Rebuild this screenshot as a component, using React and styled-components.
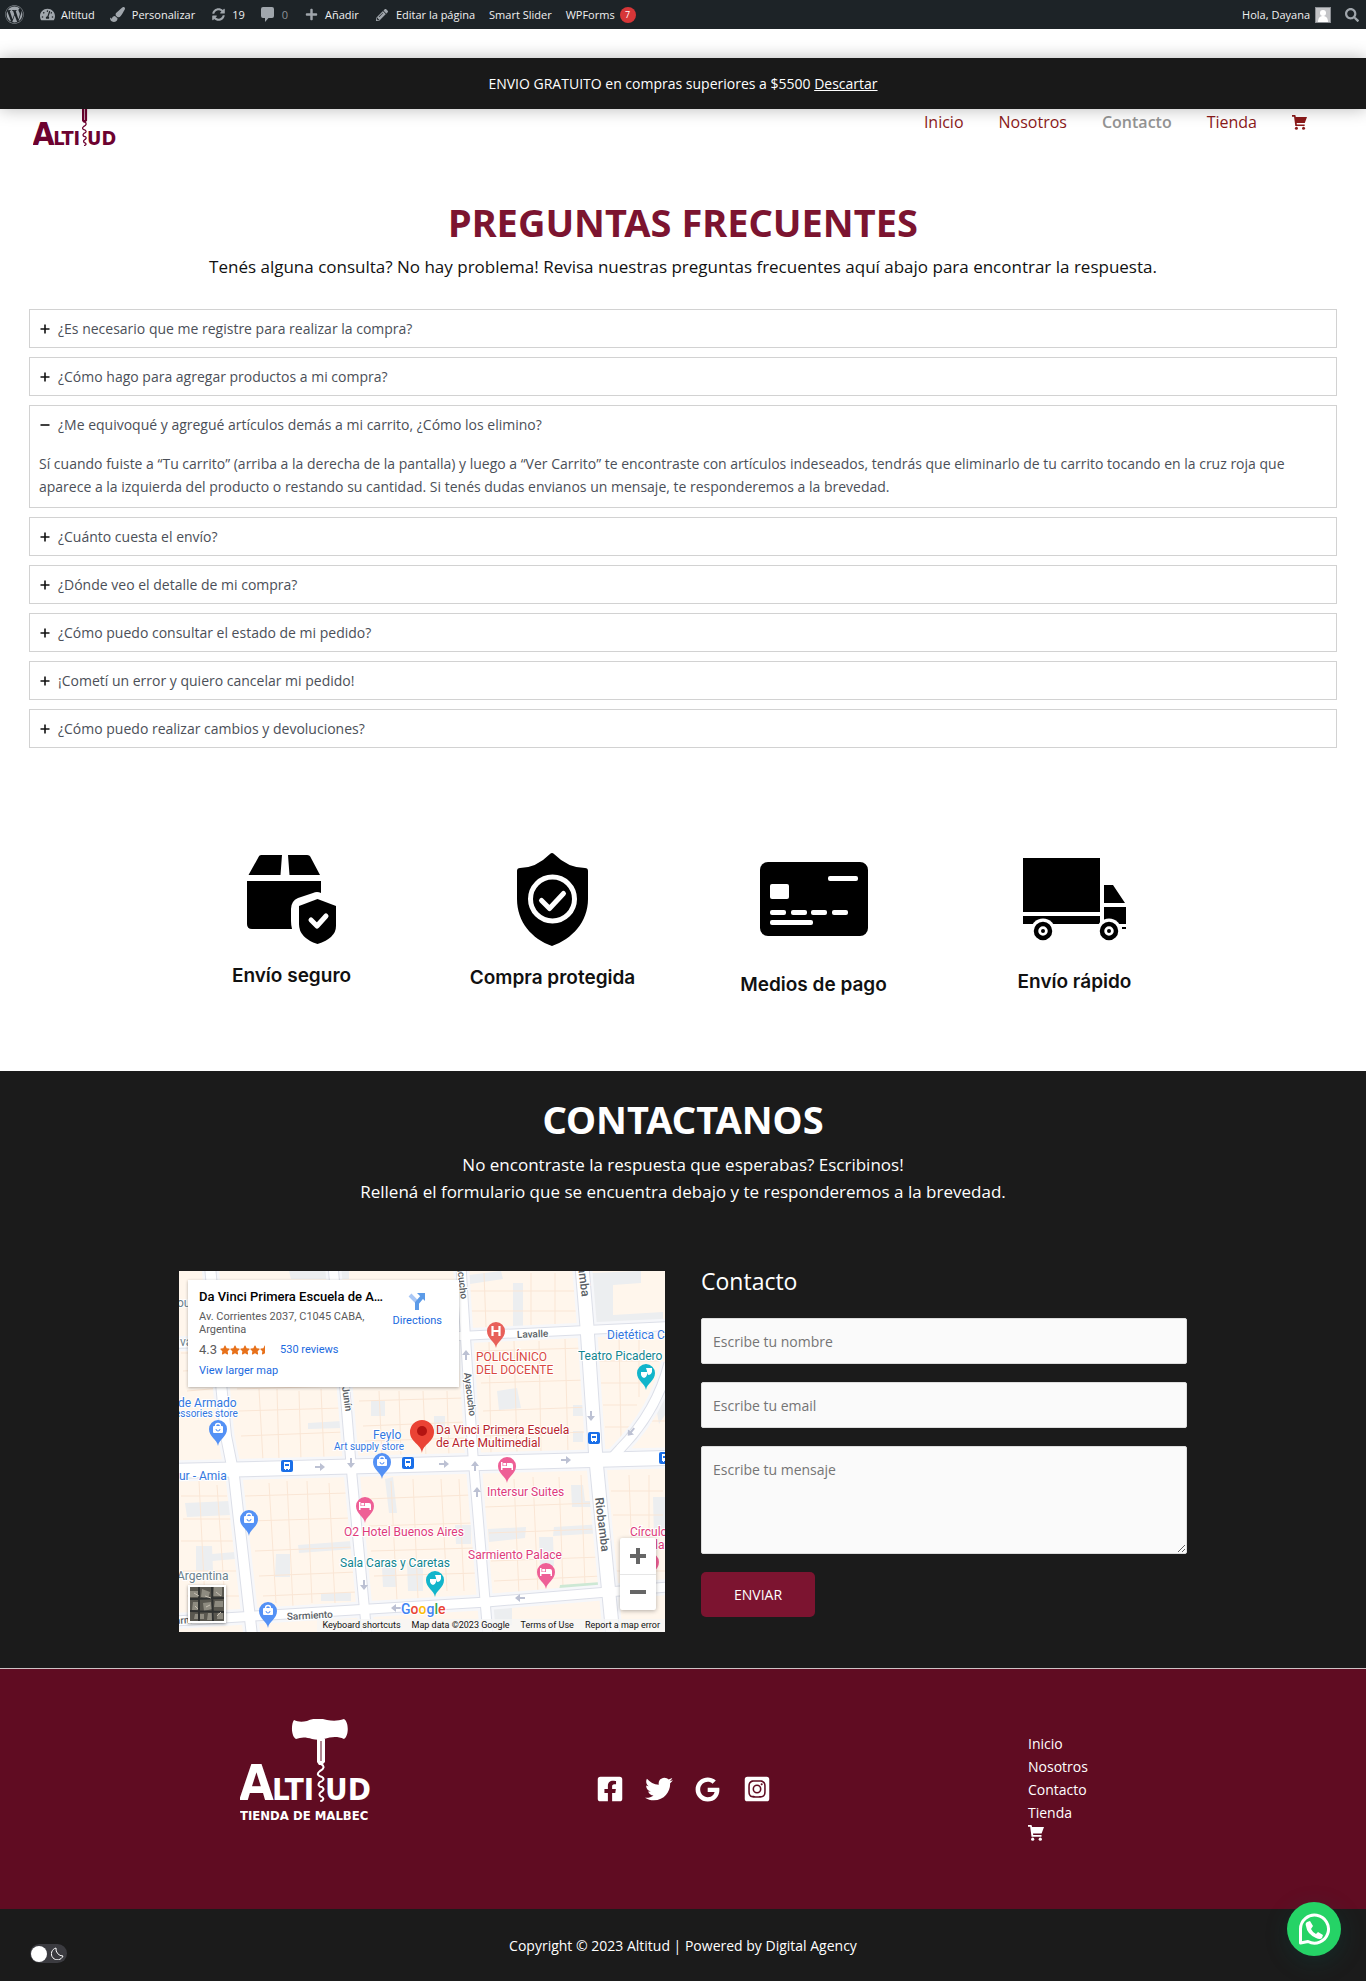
import React, { useState } from "react";
import styled, { createGlobalStyle, css } from "styled-components";
import {
  FaWordpress,
  FaTachometerAlt,
  FaPaintBrush,
  FaSyncAlt,
  FaPlus,
  FaPencilAlt,
  FaSearch,
  FaFacebookSquare,
  FaTwitter,
  FaGoogle,
  FaInstagramSquare,
  FaStar,
  FaStarHalf,
} from "react-icons/fa";

const GlobalStyle = createGlobalStyle`
  *, *::before, *::after { box-sizing: border-box; }
  body {
    margin: 0;
    background: #fff;
    font-family: "Open Sans", "Noto Sans", sans-serif;
    font-size: 14px;
    color: #4b4f58;
  }
  h1, h2, h3, p, ul { margin: 0; padding: 0; }
  ul { list-style: none; }
  a { color: inherit; text-decoration: none; }
  button, input, textarea { font: inherit; }
`;

const wine = "#7c1430";
const dark = "#1b1b1b";

/* ---------- admin bar ---------- */

const AdminBar = styled.nav`
  display: flex;
  align-items: center;
  justify-content: space-between;
  height: 29px;
  padding: 0 7px 0 5px;
  background: #1d2327;
  color: #f0f0f1;
  font-size: 11px;
`;

const AdminGroup = styled.ul`
  display: flex;
  align-items: center;
  gap: 14px;
`;

const AdminLink = styled.a`
  display: flex;
  align-items: center;
  gap: 5px;
  color: ${(p) => (p.$muted ? "#8c9196" : "#f0f0f1")};
  white-space: nowrap;
`;

const AdminIcon = styled.span`
  display: flex;
  justify-content: center;
  width: 18px;
  color: #a0a6ac;
`;

const Badge = styled.span`
  display: grid;
  place-items: center;
  width: 16px;
  height: 16px;
  border-radius: 50%;
  background: #d63638;
  color: #fff;
  font-size: 9px;
`;

const CommentIcon = () => (
  <svg width="13" height="15" viewBox="0 0 13 15" fill="currentColor" aria-hidden="true">
    <path d="M2 0h9a2 2 0 0 1 2 2v7a2 2 0 0 1-2 2H7.500L4 15v-4H2a2 2 0 0 1-2-2V2a2 2 0 0 1 2-2z" />
  </svg>
);

const Avatar = () => (
  <svg width="16" height="16" viewBox="0 0 16 16" aria-hidden="true">
    <rect width="16" height="16" fill="#c3c4c7" />
    <rect x=".5" y=".5" width="15" height="15" fill="none" stroke="#8c8f94" />
    <circle cx="8" cy="6" r="3" fill="#fff" />
    <path d="M3 15c0-4 2-6 5-6s5 2 5 6z" fill="#fff" />
  </svg>
);

const adminItems = [
  { label: "Altitud", icon: <FaTachometerAlt size={15} /> },
  { label: "Personalizar", icon: <FaPaintBrush size={15} /> },
  { label: "19", icon: <FaSyncAlt size={13} /> },
  { label: "0", icon: <CommentIcon />, muted: true },
  { label: "Añadir", icon: <FaPlus size={13} /> },
  { label: "Editar la página", icon: <FaPencilAlt size={12} /> },
  { label: "Smart Slider" },
  { label: "WPForms", badge: "7" },
];

function TopBar() {
  return (
    <AdminBar aria-label="Administración">
      <AdminGroup>
        <li>
          <AdminLink href="#wordpress" aria-label="WordPress">
            <FaWordpress size={19} color="#a0a6ac" />
          </AdminLink>
        </li>
        {adminItems.map((item) => (
          <li key={item.label}>
            <AdminLink href="#admin" $muted={item.muted}>
              {item.icon && <AdminIcon>{item.icon}</AdminIcon>}
              {item.label}
              {item.badge && <Badge>{item.badge}</Badge>}
            </AdminLink>
          </li>
        ))}
      </AdminGroup>
      <AdminGroup>
        <li>
          <AdminLink href="#perfil">
            Hola, Dayana
            <Avatar />
          </AdminLink>
        </li>
        <li>
          <AdminLink href="#buscar" aria-label="Buscar">
            <FaSearch size={14} color="#a0a6ac" />
          </AdminLink>
        </li>
      </AdminGroup>
    </AdminBar>
  );
}

/* ---------- logo ---------- */

const LogoText = styled.text`
  font-family: "Liberation Sans Narrow", "DejaVu Sans Condensed", sans-serif;
  font-weight: 700;
  font-size: ${(p) => p.$size}px;
`;

function Logo({ width, height, viewBox, color, groove, tagline }) {
  return (
    <svg width={width} height={height} viewBox={viewBox} fill={color} role="img" aria-label="Altitud">
      <LogoText x="-1" y="81" $size={50}>A</LogoText>
      <LogoText x="32" y="81" $size={31}>LTI</LogoText>
      <LogoText x="85" y="81" $size={31}>UD</LogoText>
      <path d="M54 1c4 2 8 2 13 1 6-3 14-3 20-1 6 1 11 1 17-1 5 3 5 17 0 20-7-3-13-2-20 0-4 1-8 1-12 0-6-2-11-2-16 0-5-3-5-15-2-19z" />
      <path d="M77 20h8v23l-3 3h-3l-2-3z" />
      <path d="M81 22v20" stroke={groove} strokeWidth="1" />
      <path
        d="M81 45c4 2 3 5-1 7-4 3-2 5 2 6 3 2 1 4-2 5-3 3-1 5 2 5 3 2 1 4-1 5-3 2-1 5 1 5 3 2 0 4-1 4"
        fill="none"
        stroke={color}
        strokeWidth="2"
        strokeLinecap="round"
      />
      {tagline && <LogoText x="0" y="101" $size={13}>{tagline}</LogoText>}
    </svg>
  );
}

const CartIcon = ({ size = 16 }) => (
  <svg width={size} height={size} viewBox="0 0 16 16" fill="currentColor" aria-hidden="true">
    <path d="M0 0h3.500l.6 2H16l-2.400 6.500H5l.2 1.500h8.300v1.800H3.500L2.200 1.800H0z" />
    <circle cx="4.700" cy="14.200" r="1.600" />
    <circle cx="12.300" cy="14.200" r="1.600" />
  </svg>
);

/* ---------- header ---------- */

const Banner = styled.div`
  position: absolute;
  top: 58px;
  left: 0;
  right: 0;
  z-index: 5;
  padding: 16px 20px;
  background: #191919;
  box-shadow: 0 0 16px rgba(0, 0, 0, 0.28);
  color: #fff;
  font-weight: 500;
  text-align: center;
  line-height: 19px;

  a { text-decoration: underline; }
`;

const Header = styled.header`
  display: flex;
  align-items: flex-end;
  justify-content: space-between;
  padding: 64px 59px 15px 33px;
`;

const HomeLink = styled.a`
  display: block;

  svg { display: block; }
`;

const MainNav = styled.ul`
  display: flex;
  align-items: center;
  gap: 35px;
  padding-bottom: 13px;
`;

const NavLink = styled.a`
  display: block;
  color: ${(p) => (p.$active ? "#949494" : "#8b1a1a")};
  font-size: 16px;
  font-weight: ${(p) => (p.$active ? 600 : 500)};
  line-height: 24px;

  svg { display: block; }
`;

/* ---------- FAQ ---------- */

const FaqSection = styled.section`
  padding: 38px 29px 0;
`;

const Title = styled.h1`
  color: ${(p) => p.$color};
  font-family: "Noto Sans", "Open Sans", sans-serif;
  font-size: 38px;
  font-weight: 700;
  line-height: 44px;
  text-align: center;
`;

const Lead = styled.p`
  margin-top: ${(p) => p.$gap}px;
  color: ${(p) => p.$color};
  font-size: 17px;
  line-height: 27px;
  text-align: center;
`;

const FaqList = styled.div`
  display: grid;
  gap: 9px;
  margin-top: 29px;
`;

const FaqItem = styled.article`
  border: 1px solid #d2d2d2;
`;

const FaqButton = styled.button`
  display: flex;
  align-items: center;
  gap: 8px;
  width: 100%;
  height: 37px;
  padding: 0 10px;
  border: 0;
  background: none;
  color: #4b4f58;
  text-align: left;
  cursor: pointer;
`;

const FaqAnswer = styled.p`
  padding: 9px;
  line-height: 23px;
`;

const questions = [
  { q: "¿Es necesario que me registre para realizar la compra?", a: "No es necesario registrarse." },
  { q: "¿Cómo hago para agregar productos a mi compra?", a: "Desde la tienda." },
  {
    q: "¿Me equivoqué y agregué artículos demás a mi carrito, ¿Cómo los elimino?",
    a: "Sí cuando fuiste a “Tu carrito” (arriba a la derecha de la pantalla) y luego a “Ver Carrito” te encontraste con artículos indeseados, tendrás que eliminarlo de tu carrito tocando en la cruz roja que aparece a la izquierda del producto o restando su cantidad. Si tenés dudas envianos un mensaje, te responderemos a la brevedad.",
  },
  { q: "¿Cuánto cuesta el envío?", a: "Depende de tu ubicación." },
  { q: "¿Dónde veo el detalle de mi compra?", a: "En tu cuenta." },
  { q: "¿Cómo puedo consultar el estado de mi pedido?", a: "En tu cuenta." },
  { q: "¡Cometí un error y quiero cancelar mi pedido!", a: "Envianos un mensaje." },
  { q: "¿Cómo puedo realizar cambios y devoluciones?", a: "Envianos un mensaje." },
];

const Sign = ({ open }) => (
  <svg width="10" height="10" viewBox="0 0 10 10" stroke="#111" strokeWidth="1.6" aria-hidden="true">
    <path d={open ? "M.5 5h9" : "M.5 5h9M5 .5v9"} />
  </svg>
);

function Faq() {
  const [open, setOpen] = useState(2);
  return (
    <FaqSection>
      <Title $color={wine}>PREGUNTAS FRECUENTES</Title>
      <Lead $color="#111" $gap={9}>
        Tenés alguna consulta? No hay problema! Revisa nuestras preguntas frecuentes aquí abajo para encontrar la respuesta.
      </Lead>
      <FaqList>
        {questions.map((item, i) => (
          <FaqItem key={item.q}>
            <FaqButton type="button" aria-expanded={open === i} onClick={() => setOpen(open === i ? -1 : i)}>
              <Sign open={open === i} />
              {item.q}
            </FaqButton>
            {open === i && <FaqAnswer>{item.a}</FaqAnswer>}
          </FaqItem>
        ))}
      </FaqList>
    </FaqSection>
  );
}

/* ---------- features ---------- */

const Features = styled.section`
  display: grid;
  grid-template-columns: repeat(4, 1fr);
  align-items: start;
  max-width: 1044px;
  margin: 0 auto;
  padding: 102px 0 73px;
`;

const Feature = styled.figure`
  display: flex;
  flex-direction: column;
  align-items: center;
  margin: 0;
`;

const FeatureLabel = styled.figcaption`
  color: #111;
  font-family: Inter, "Open Sans", sans-serif;
  font-size: 19px;
  font-weight: 600;
  line-height: 26px;
`;

const BoxDrawing = () => (
  <svg width="120" height="113" viewBox="1 0 120 113" aria-hidden="true">
    <path d="M30 5h21l-1.500 20H17.500L27 8q1-3 3-3zM57 5h19q3 0 4 3l9 17H58.500z" />
    <path d="M16 31h74v12q-4-2-8 0l-15 5q-7 3-7 11v12q0 4 1 8H21q-5 0-5-5z" />
    <path d="M86.500 49l18.500 7v20q0 12-18.500 18Q68 88 68 74V56z" />
    <path d="M80 70l6 6 9-10" fill="none" stroke="#fff" strokeWidth="5" strokeLinecap="round" strokeLinejoin="round" />
  </svg>
);

const ShieldDrawing = () => (
  <svg width="120" height="115" viewBox="1 0 120 115" aria-hidden="true">
    <path d="M58 4q2-2 4 0 14 14 31 14 3 0 3 3v28c0 23-16 40-36 47-20-7-35-24-35-47V21q0-3 3-3 16 0 30-14z" />
    <circle cx="60.500" cy="49" r="22" fill="none" stroke="#fff" strokeWidth="5" />
    <path d="M49.500 50.500l8 8 14-15" fill="none" stroke="#fff" strokeWidth="5" strokeLinecap="round" strokeLinejoin="round" />
  </svg>
);

const CardDrawing = () => (
  <svg width="120" height="122" viewBox="0 0 120 122" aria-hidden="true">
    <rect x="6" y="12" width="108" height="74" rx="8" />
    <g fill="#fff">
      <rect x="74" y="26" width="30" height="5" rx="2" />
      <rect x="16" y="34" width="19" height="15" rx="2" />
      <rect x="16" y="60" width="16" height="5" rx="2" />
      <rect x="37" y="60" width="16" height="5" rx="2" />
      <rect x="57" y="60" width="16" height="5" rx="2" />
      <rect x="78" y="60" width="16" height="5" rx="2" />
      <rect x="16" y="70" width="43" height="5" rx="2" />
    </g>
  </svg>
);

const TruckDrawing = () => (
  <svg width="120" height="119" viewBox="1 0 120 119" aria-hidden="true">
    <path d="M9 8h77v54H9zM9 66h77v8H9zM90 35h9l12 18H90zM90 57h22v17H90zM108 77h4v2h-4z" />
    {[29, 95].map((x) => (
      <g key={x}>
        <circle cx={x} cy="81" r="12.500" fill="#fff" />
        <circle cx={x} cy="81" r="7" fill="#fff" stroke="#000" strokeWidth="4.500" />
        <circle cx={x} cy="81" r="2" />
      </g>
    ))}
  </svg>
);

/* ---------- map ---------- */

const MapFrame = styled.div`
  position: relative;
  height: 361px;
  overflow: hidden;
  background: #f5f6f8;
  font-family: Roboto, sans-serif;
`;

const MapSvg = styled.svg`
  display: block;
  width: 100%;
  height: 100%;
  font-family: Roboto, sans-serif;
`;

const MapLabel = styled.text`
  font-size: ${(p) => (p.$small ? 10 : 12)}px;
  fill: ${(p) => p.$color};
  font-weight: ${(p) => (p.$street ? 500 : 400)};
  stroke: #fff;
  stroke-width: 2px;
  paint-order: stroke;
`;

const PlaceCard = styled.div`
  position: absolute;
  top: 9px;
  left: 9px;
  display: flex;
  justify-content: space-between;
  width: 271px;
  height: 107px;
  padding: 9px 17px 0 11px;
  background: #fff;
  box-shadow: 0 1px 3px rgba(0, 0, 0, 0.3);
  color: #5b5b5b;
  font-size: 11px;
  line-height: 13px;

  a { color: #1a6ae0; }
`;

const PlaceName = styled.h3`
  margin-bottom: 5px;
  color: #000;
  font-size: 13px;
  font-weight: 500;
  line-height: 16px;
`;

const Rating = styled.div`
  display: flex;
  align-items: center;
  gap: 10px;
  margin: 6px 0;
  line-height: 16px;
`;

const Score = styled.span`
  display: flex;
  align-items: center;
  gap: 3px;
  font-size: 13px;
`;

const Stars = styled.span`
  display: flex;
  color: #e7711b;
`;

const Directions = styled.a`
  display: flex;
  flex-direction: column;
  align-items: center;
  gap: 4px;
  padding-top: 3px;
`;

const Thumb = styled.svg`
  position: absolute;
  left: 9px;
  bottom: 9px;
  border: 2px solid #fff;
  box-shadow: 0 1px 3px rgba(0, 0, 0, 0.4);
`;

const ZoomBox = styled.div`
  position: absolute;
  right: 9px;
  bottom: 22px;
  width: 36px;
  background: #fff;
  border-radius: 2px;
  box-shadow: 0 1px 4px rgba(0, 0, 0, 0.3);
`;

const ZoomButton = styled.button`
  display: grid;
  place-items: center;
  width: 100%;
  height: 36px;
  padding: 0;
  border: 0;
  background: none;
  color: #666;

  & + & { box-shadow: inset 0 1px 0 #e6e6e6; }
`;

const MapTerms = styled.div`
  position: absolute;
  right: 0;
  bottom: 0;
  display: flex;
  gap: 11px;
  padding: 0 5px;
  background: rgba(245, 245, 245, 0.75);
  color: #111;
  font-size: 9px;
  line-height: 13px;
`;

const roads = [
  ["M-5 73L281 65L490 55", 8],
  ["M-5 350L191 338L308 331L490 316", 9],
  ["M31 -5L47 165L55 205L73 365", 10],
  ["M154 -5L166 120L173 205L188 365", 9],
  ["M282 -5L294 185L309 365", 9],
  ["M403 -5L408 56L417 189L434 365", 13],
  ["M490 92Q478 140 441 178L430 190", 9],
  ["M-5 200L190 195L490 187", 14],
];

const greyBlocks = [
  "M6 232l45-2 1 14-44 2z", "M17 275h16l1 25H17z", "M33 283l23-2v7l-23 2z", "M97 283h14v23H96z",
  "M119 274l54-4 1 8-54 4z", "M206 208l8-2 4 36h-8z", "M129 152l34-2v7l-34 1z", "M192 130h14v15h-14z",
  "M290 4l32-4 2 8-33 5z", "M318 120l20-3 4 20-22 2z", "M412 2l50-2v12l-28 2v30l50-3v10l-72 3z",
  "M394 134h10v11h-10zM394 160h10v11h-10z", "M309 258l38-2-1 11-36 4z", "M375 256l50-3v9l-51 3z",
  "M392 214h12l2 16h12v6h-25z", "M255 145h11v18h-11z", "M360 266h14l1 29h-14z", "M303 334l30-2v22h-28z",
  "M474 226h12v40h-11z", "M228 292h16v28h-15z", "M334 12h10v45h-10z", "M110 0h60v8h-58z", "M476 130l10-14v28l-6 9z",
  "M203 296h14l1 20h-14z", "M276 254h16v19h-15z", "M142 322h30v8h-30z",
];

const lots = [
  "M2 82h38M4 100l38-2M8 120l35-3M58 118l105-3M60 140l103-3M62 165l104-4M80 118l4 72M98 118l2 72M120 120l2 70M142 118l3 70",
  "M66 225l103-3M70 250l102-3M76 280l100-4M80 305l98-4M84 325l94-4M90 212l7 120M108 210l6 126M128 210l5 122M150 212l6 120",
  "M2 225h46M4 248h50M2 270h54M4 300h58M8 325h56M20 210l6 120M38 214l8 116",
  "M180 130l105-3M184 155l103-4M186 170l102-3M200 120l3 66M220 120l2 66M244 120l3 66M268 120l2 66",
  "M186 228l106-4M190 255l104-3M192 280l104-3M195 305l104-3M212 210l6 120M234 208l5 120M262 208l6 112M280 208l5 112",
  "M290 20h108M292 40h106M300 80l106-3M302 112l106-3M304 140l108-4M306 165l100-4M310 70l2 112M335 70l3 112M360 70l2 112M386 68l3 114M305 2l2 54M352 2v52M376 2v52",
  "M306 236l110-4M310 262l108-4M312 290l110-4M315 310l108-5M335 208l5 116M354 206l5 116M380 206l4 110M402 204l4 110",
  "M420 90h60M422 112h44M424 134h34M426 156h26M440 66l2 100M460 66v60M432 220h52M434 244h50M436 300h50M450 204l4 110M470 204v106M470 150h16",
];

const pinPath = "M0 17C-1 10-9 8-9 0a9 9 0 0 1 18 0C9 8 1 10 0 17z";

const pinGlyph = {
  bag: (
    <g>
      <rect x="-5" y="-3" width="10" height="7" rx="1" fill="#fff" />
      <path d="M-2.500-2v-1a2.500 2.500 0 0 1 5 0v1" fill="none" stroke="#fff" strokeWidth="1.300" />
      <path d="M-2 0a2 2 0 0 0 4 0" fill="none" stroke="#5491f5" />
    </g>
  ),
  hotel: <path d="M-6-4h1.500v4H0v-3h4q2 0 2 2v5H4.500V2h-9v2H-6zM-3.800-3h3v2.400h-3z" fill="#fff" />,
  theatre: (
    <g fill="#fff">
      <path d="M-5-1h6v3q-1 3-3 3t-3-3z" />
      <path d="M0-5h6v4q-1 3-3 3-2 0-2-4z" />
    </g>
  ),
  cross: <path d="M-3.500-5V5M3.500-5V5M-3.500 0h7" stroke="#fff" strokeWidth="2.200" />,
};

const pins = [
  [39, 158, "#5491f5", "bag"],
  [203, 191, "#5491f5", "bag"],
  [70, 248, "#5491f5", "bag"],
  [89, 340, "#5491f5", "bag"],
  [186, 235, "#ee5f96", "hotel"],
  [328, 195, "#ee5f96", "hotel"],
  [367, 301, "#ee5f96", "hotel"],
  [471, 291, "#ee5f96", "hotel"],
  [467, 102, "#12b5cb", "theatre"],
  [256, 309, "#12b5cb", "theatre"],
  [317, 60, "#e8605a", "cross"],
];

const blue = "#3277e0";
const pink = "#de3b7b";
const teal = "#12858f";

const labels = [
  [297, 90, "POLICLÍNICO", "#d9493f"],
  [297, 103, "DEL DOCENTE", "#d9493f"],
  [428, 68, "Dietética C", blue],
  [399, 89, "Teatro Picadero", teal],
  [257, 163, "Da Vinci Primera Escuela", "#b8242a"],
  [257, 176, "de Arte Multimedial", "#b8242a"],
  [308, 225, "Intersur Suites", pink],
  [-1, 136, "de Armado", blue],
  [-4, 146, "essories store", blue, true],
  [194, 168, "Feylo", blue],
  [155, 179, "Art supply store", blue, true],
  [0, 209, "ur - Amia", blue],
  [165, 265, "O2 Hotel Buenos Aires", pink],
  [161, 296, "Sala Caras y Caretas", teal],
  [289, 288, "Sarmiento Palace", pink],
  [451, 265, "Círculo", pink],
  [476, 278, "la", pink],
  [-2, 309, "Argentina", "#6b7f8c"],
  [-2, 36, "ou", "#6b7f8c"],
  [1, 75, "va", "#6b7f8c"],
];

const streets = [
  [338, 67, -2, "Lavalle", true],
  [108, 349, -3, "Sarmiento", true],
  [-4, 353, -3, "armiento", true],
  [163, 116, 82, "Junín", true],
  [285, 102, 83, "Ayacucho", true],
  [278, -4, 83, "acucho", true],
  [399, -4, 83, "amba"],
  [416, 227, 83, "Riobamba"],
];

const arrows = [
  [141, 196, 0], [265, 193, 0], [387, 189, 0], [172, 192, 90], [287, 84, -90], [296, 195, -90],
  [298, 221, -90], [412, 145, 90], [185, 314, 90], [341, 327, 180], [452, 161, 130], [217, 337, 180],
];

const stops = [[108, 195], [229, 192], [415, 167], [486, 187]];

function LocationMap() {
  return (
    <MapFrame>
      <MapSvg viewBox="0 0 486 361" preserveAspectRatio="xMidYMid slice" role="img" aria-label="Mapa">
        <rect width="486" height="361" fill="#fff6ec" />
        {greyBlocks.map((d) => <path key={d} d={d} fill="#eceef0" />)}
        {lots.map((d) => <path key={d} d={d} fill="none" stroke="#fae6d5" />)}
        <path d="M381 314l41-3v4l-42 4z" fill="#cde8d4" />
        {roads.map(([d, w]) => <path key={d} d={d} fill="none" stroke="#f6f7fa" strokeWidth={w + 7} />)}
        {roads.map(([d, w]) => <path key={d} d={d} fill="none" stroke="#dcdfe8" strokeWidth={w + 2} />)}
        {roads.map(([d, w]) => <path key={d} d={d} fill="none" stroke="#fff" strokeWidth={w} />)}
        {arrows.map(([x, y, r]) => (
          <path key={`${x}-${y}`} transform={`translate(${x} ${y}) rotate(${r})`} d="M-5-1h5v-3l5 4-5 4v-3h-5z" fill="#bcc1d3" />
        ))}
        {stops.map(([x, y]) => (
          <g key={x} transform={`translate(${x} ${y})`}>
            <rect x="-6" y="-6" width="12" height="12" rx="2" fill="#1a6fe8" />
            <path d="M-3-4h6v7h-1v1h-1V3h-2v1h-1V3h-1z" fill="#fff" />
            <path d="M-2-2h4v2h-4z" fill="#1a6fe8" />
          </g>
        ))}
        {pins.map(([x, y, color, glyph]) => (
          <g key={`${x}-${y}`} transform={`translate(${x} ${y})`}>
            <path d={pinPath} fill={color} />
            {pinGlyph[glyph]}
          </g>
        ))}
        {streets.map(([x, y, r, text, small]) => (
          <MapLabel key={text} transform={`translate(${x} ${y}) rotate(${r})`} $color="#5a5f66" $street $small={small}>
            {text}
          </MapLabel>
        ))}
        {labels.map(([x, y, text, color, small]) => (
          <MapLabel key={text} x={x} y={y} $color={color} $small={small}>{text}</MapLabel>
        ))}
        <path transform="translate(243 161)" d="M0 21C-1 12-12 10-12 0a12 12 0 0 1 24 0C12 10 1 12 0 21z" fill="#ea4335" />
        <circle cx="243" cy="160" r="5" fill="#b31412" />
        <text x="222" y="343" fontSize="14" fontWeight="500" stroke="#fff" strokeWidth="2" paintOrder="stroke">
          <tspan fill="#4285f4">G</tspan><tspan fill="#ea4335">o</tspan><tspan fill="#fbbc04">o</tspan><tspan fill="#4285f4">g</tspan><tspan fill="#34a853">l</tspan><tspan fill="#ea4335">e</tspan>
        </text>
      </MapSvg>
      <PlaceCard>
        <div>
          <PlaceName>Da Vinci Primera Escuela de A…</PlaceName>
          <p>Av. Corrientes 2037, C1045 CABA,<br />Argentina</p>
          <Rating>
            <Score>
              4.3
              <Stars>
                <FaStar size={10} /><FaStar size={10} /><FaStar size={10} /><FaStar size={10} /><FaStarHalf size={10} />
              </Stars>
            </Score>
            <a href="#reviews">530 reviews</a>
          </Rating>
          <a href="#map">View larger map</a>
        </div>
        <Directions href="#directions">
          <svg width="18" height="18" viewBox="0 0 18 18" fill="none" aria-hidden="true">
            <path d="M2 3l7 7v8" stroke="#a9c7f5" strokeWidth="4" />
            <path d="M9 18v-7l5-6" stroke="#5c9be8" strokeWidth="4" />
            <path d="M9 1h8v8z" fill="#5c9be8" />
          </svg>
          Directions
        </Directions>
      </PlaceCard>
      <Thumb width="38" height="38" viewBox="0 0 34 34" aria-hidden="true">
        <rect width="34" height="34" fill="#59574f" />
        <path d="M0 4h9v6H0zM12 2l8 3-2 7-7-2zM24 0h8v9h-9zM3 15h6v8H2zM13 16l8-1 1 7-8 2zM25 14h8v6h-9zM5 27h9v5H4zM18 26h6v7h-7zM28 24h5v8h-6z" fill="#8e8b80" />
        <path d="M9 0v34M22 0l1 34M0 12l34-1M0 24l34 1" stroke="#2f3130" strokeWidth="2" />
        <path d="M4 6l5 3M15 9l6 2M26 5l5 4M5 19l3 3M16 20l4-2M27 29l4-4" stroke="#c6bfb2" />
      </Thumb>
      <ZoomBox>
        <ZoomButton type="button" aria-label="Zoom in">
          <svg width="16" height="16" viewBox="0 0 16 16" stroke="currentColor" strokeWidth="4"><path d="M0 8h16M8 0v16" /></svg>
        </ZoomButton>
        <ZoomButton type="button" aria-label="Zoom out">
          <svg width="16" height="16" viewBox="0 0 16 16" stroke="currentColor" strokeWidth="4"><path d="M0 8h16" /></svg>
        </ZoomButton>
      </ZoomBox>
      <MapTerms>
        <span>Keyboard shortcuts</span>
        <span>Map data ©2023 Google</span>
        <a href="#terms">Terms of Use</a>
        <a href="#report">Report a map error</a>
      </MapTerms>
    </MapFrame>
  );
}

/* ---------- contact ---------- */

const ContactSection = styled.section`
  padding: 26px 20px 36px;
  background: ${dark};
  color: #fff;
`;

const ContactGrid = styled.div`
  display: grid;
  grid-template-columns: 1fr 1fr;
  gap: 36px;
  max-width: 1008px;
  margin: 66px auto 0;
`;

const ContactForm = styled.form`
  display: flex;
  flex-direction: column;
  align-items: flex-start;
  gap: 18px;
`;

const FormTitle = styled.h3`
  margin-bottom: 9px;
  font-size: 23px;
  font-weight: 400;
  line-height: 20px;
`;

const field = css`
  display: block;
  width: 100%;
  padding: 11px;
  border: 1px solid #ddd;
  border-radius: 2px;
  background: #fafafa;
  color: #333;
  line-height: 24px;

  &::placeholder { color: #757575; }
`;

const TextInput = styled.input`
  ${field}
  height: 46px;
`;

const TextArea = styled.textarea`
  ${field}
  height: 108px;
  resize: vertical;
`;

const SubmitButton = styled.button`
  padding: 12px 33px;
  border: 0;
  border-radius: 5px;
  background: ${wine};
  color: #fff;
  font-weight: 500;
  line-height: 21px;
`;

/* ---------- footer ---------- */

const FooterTop = styled.footer`
  padding: 50px 20px;
  border-top: 1px solid #cfc3c6;
  background: #600c22;
  color: #fff;
`;

const FooterGrid = styled.div`
  display: grid;
  grid-template-columns: repeat(3, 1fr);
  align-items: center;
  justify-items: center;
  max-width: 1131px;
  min-height: 140px;
  margin: 0 auto;
`;

const FooterLogo = styled(HomeLink)`
  align-self: start;
`;

const Socials = styled.div`
  display: flex;
  align-items: center;
  gap: 20px;

  a { display: flex; justify-content: center; width: 29px; }
`;

const FooterNav = styled.ul`
  width: 64px;
  line-height: 23px;
  font-weight: 500;

  li { height: 23px; }
`;

const Copyright = styled.div`
  padding: 25px 20px;
  background: ${dark};
  color: #fff;
  font-weight: 500;
  line-height: 23px;
  text-align: center;
`;

const ChatButton = styled.a`
  position: fixed;
  right: 25px;
  bottom: 25px;
  display: grid;
  place-items: center;
  width: 54px;
  height: 54px;
  border-radius: 50%;
  background: #25d366;
  box-shadow: 1px 6px 24px rgba(7, 94, 84, 0.24);
`;

const ModeToggle = styled.button`
  position: fixed;
  left: 30px;
  bottom: 18px;
  display: flex;
  align-items: center;
  justify-content: space-between;
  width: 37px;
  height: 19px;
  padding: 1px 3px 1px 1px;
  border: 0;
  border-radius: 10px;
  background: #3b3b40;
`;

const Knob = styled.span`
  width: 16px;
  height: 16px;
  border-radius: 50%;
  background: #fff;
`;

const links = ["Inicio", "Nosotros", "Contacto", "Tienda"];

export default function App() {
  return (
    <>
      <GlobalStyle />
      <TopBar />
      <Banner role="status">
        ENVIO GRATUITO en compras superiores a $5500 <a href="#descartar">Descartar</a>
      </Banner>
      <Header>
        <HomeLink href="#inicio" aria-label="Altitud">
          <Logo width={84} height={54} viewBox="0 0 132 84" color="#6d0230" groove="#fff" />
        </HomeLink>
        <nav aria-label="Principal">
          <MainNav>
            {links.map((link) => (
              <li key={link}>
                <NavLink href={`#${link.toLowerCase()}`} $active={link === "Contacto"}>{link}</NavLink>
              </li>
            ))}
            <li>
              <NavLink href="#carrito" aria-label="Carrito"><CartIcon size={15} /></NavLink>
            </li>
          </MainNav>
        </nav>
      </Header>
      <main>
        <Faq />
        <Features>
          <Feature><BoxDrawing /><FeatureLabel>Envío seguro</FeatureLabel></Feature>
          <Feature><ShieldDrawing /><FeatureLabel>Compra protegida</FeatureLabel></Feature>
          <Feature><CardDrawing /><FeatureLabel>Medios de pago</FeatureLabel></Feature>
          <Feature><TruckDrawing /><FeatureLabel>Envío rápido</FeatureLabel></Feature>
        </Features>
        <ContactSection>
          <Title as="h2" $color="#fff">CONTACTANOS</Title>
          <Lead $color="#fff" $gap={10}>
            No encontraste la respuesta que esperabas? Escribinos!<br />
            Rellená el formulario que se encuentra debajo y te responderemos a la brevedad.
          </Lead>
          <ContactGrid>
            <LocationMap />
            <ContactForm onSubmit={(e) => e.preventDefault()}>
              <FormTitle>Contacto</FormTitle>
              <TextInput type="text" aria-label="Nombre" placeholder="Escribe tu nombre" />
              <TextInput type="email" aria-label="Email" placeholder="Escribe tu email" />
              <TextArea aria-label="Mensaje" placeholder="Escribe tu mensaje" />
              <SubmitButton type="submit">ENVIAR</SubmitButton>
            </ContactForm>
          </ContactGrid>
        </ContactSection>
      </main>
      <FooterTop>
        <FooterGrid>
          <FooterLogo href="#inicio" aria-label="Altitud">
            <Logo width={132} height={104} viewBox="0 0 132 104" color="#fff" groove="#600c22" tagline="TIENDA DE MALBEC" />
          </FooterLogo>
          <Socials>
            <a href="#facebook" aria-label="Facebook"><FaFacebookSquare size={28} /></a>
            <a href="#twitter" aria-label="Twitter"><FaTwitter size={28} /></a>
            <a href="#google" aria-label="Google"><FaGoogle size={25} /></a>
            <a href="#instagram" aria-label="Instagram"><FaInstagramSquare size={28} /></a>
          </Socials>
          <FooterNav>
            {links.map((link) => (
              <li key={link}><a href={`#${link.toLowerCase()}`}>{link}</a></li>
            ))}
            <li><a href="#carrito" aria-label="Carrito"><CartIcon size={16} /></a></li>
          </FooterNav>
        </FooterGrid>
      </FooterTop>
      <Copyright>Copyright © 2023 Altitud | Powered by Digital Agency</Copyright>
      <ModeToggle type="button" aria-label="Modo oscuro">
        <Knob />
        <svg width="13" height="13" viewBox="0 0 13 13" fill="none" stroke="#fff" aria-hidden="true">
          <path d="M5 1a6 6 0 1 0 7 8A7 7 0 0 1 5 1z" />
        </svg>
      </ModeToggle>
      <ChatButton href="#whatsapp" aria-label="WhatsApp">
        <svg width="34" height="34" viewBox="0 0 34 34" aria-hidden="true">
          <path d="M3.500 31V17A14 14 0 1 1 11 29.500z" fill="none" stroke="#fff" strokeWidth="3" strokeLinejoin="round" />
          <path d="M10 10l3-1 3 5-2 3q2 4 5 5l2-2 5 3-1 3q-2 2-6 0-9-4-10-12-1-3 1-4z" fill="#fff" />
        </svg>
      </ChatButton>
    </>
  );
}
